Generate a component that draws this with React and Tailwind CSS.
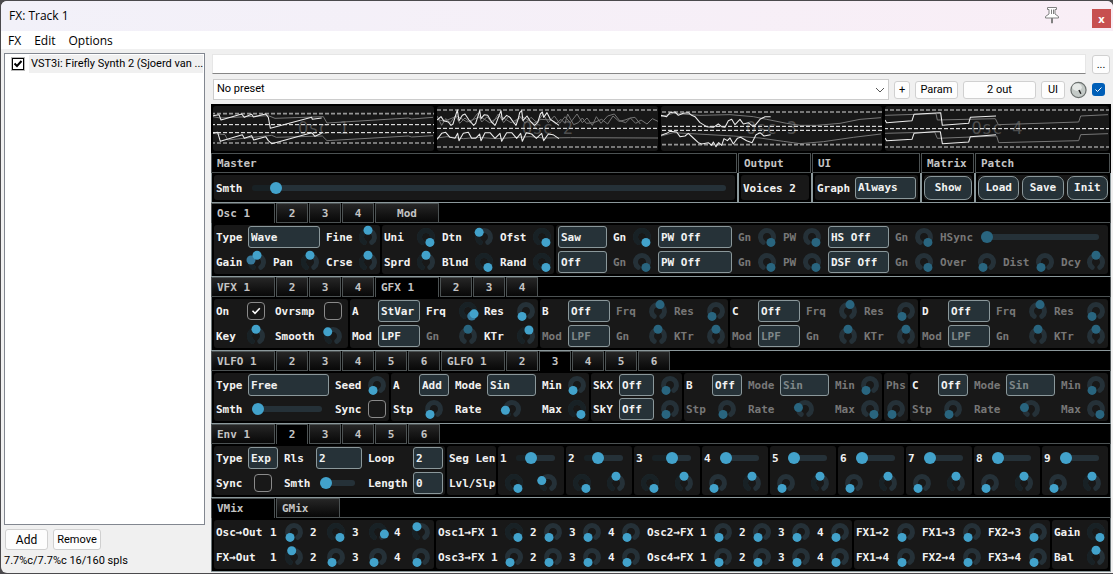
import { useId } from "react";

const RANGE = 144;

function polar(r, deg) {
  const a = (deg * Math.PI) / 180;
  return [10 + r * Math.sin(a), 10 - r * Math.cos(a)];
}

function arc(from, to) {
  const [x1, y1] = polar(6.5, from);
  const [x2, y2] = polar(6.5, to);
  return `M${x1} ${y1}A6.5 6.5 0 ${to - from > 180 ? 1 : 0} 1 ${x2} ${y2}`;
}

function Knob({ id, name, v = 0, mod, dim }) {
  const angle = -RANGE + 2 * RANGE * v;
  const [tx, ty] = polar(6.7, angle);
  const ghost = mod === undefined ? null : polar(6.3, -RANGE + 2 * RANGE * mod);
  return (
    <span className="grid h-5 w-5 justify-self-center">
      <input
        id={id}
        aria-label={name}
        type="range"
        min="0"
        max="1"
        step="0.01"
        defaultValue={v}
        disabled={dim}
        className="col-start-1 row-start-1 m-0 h-5 w-5 opacity-0"
      />
      <svg viewBox="0 0 20 20" className="pointer-events-none col-start-1 row-start-1 h-5 w-5 overflow-visible" fill="none">
        <path d={arc(-RANGE, RANGE)} stroke="#253138" strokeWidth="5" strokeLinecap="round" />
        {!dim && v > 0 && <path d={arc(-RANGE, angle)} stroke="#182125" strokeWidth="5" strokeLinecap="round" />}
        {ghost && <circle cx={ghost[0]} cy={ghost[1]} r="4.5" fill="#37799b" />}
        <circle cx={tx} cy={ty} r="4.5" fill={dim ? "#29657f" : "#42a2cb"} />
      </svg>
    </span>
  );
}

function Slider({ id, name, v = 0, dim }) {
  const fill = dim ? "#253138" : "#182125";
  return (
    <input
      id={id}
      aria-label={name}
      type="range"
      min="0"
      max="1"
      step="0.001"
      defaultValue={v}
      disabled={dim}
      style={{ backgroundImage: `linear-gradient(to right, ${fill} ${v * 100}%, #253138 ${v * 100}%)` }}
      className={
        "mr-[7px] ml-1 h-[6px] appearance-none rounded-full [&::-webkit-slider-thumb]:h-3 [&::-webkit-slider-thumb]:w-3 [&::-webkit-slider-thumb]:appearance-none [&::-webkit-slider-thumb]:rounded-full " +
        (dim ? "[&::-webkit-slider-thumb]:bg-[#29657f]" : "[&::-webkit-slider-thumb]:bg-[#42a2cb]")
      }
    />
  );
}

function Combo({ id, name, v, dim }) {
  return (
    <select
      id={id}
      aria-label={name}
      disabled={dim}
      className={
        "h-[22px] appearance-none rounded-[3px] border border-[#8b989b] bg-[#263238] pl-[2px] leading-none opacity-100 " +
        (dim ? "text-[#7f8789]" : "text-[#f2f2f2]")
      }
    >
      <option>{v}</option>
    </select>
  );
}

function Check({ id, name, v }) {
  return (
    <span className="grid h-[18px] w-[18px] justify-self-center">
      <input
        id={id}
        aria-label={name}
        type="checkbox"
        defaultChecked={v}
        className="peer col-start-1 row-start-1 m-0 h-[18px] w-[18px] appearance-none rounded-[4px] border border-[#8a8a8a]"
      />
      <svg
        viewBox="0 0 18 18"
        className="pointer-events-none invisible col-start-1 row-start-1 peer-checked:visible"
        fill="none"
        stroke="#ffffff"
        strokeWidth="1.6"
      >
        <path d="M5.5 8.8L8 11.3L12.8 6.3" />
      </svg>
    </span>
  );
}

function Lab({ htmlFor, dim, children }) {
  const Tag = htmlFor ? "label" : "span";
  return (
    <Tag htmlFor={htmlFor} className={"pt-[2px] " + (dim ? "text-[#777777]" : "text-[#f2f2f2]")}>
      {children}
    </Tag>
  );
}

const KINDS = { knob: Knob, slider: Slider, combo: Combo, check: Check };

function P({ l, k = "knob", dim, ...rest }) {
  const id = useId();
  const Control = KINDS[k];
  return (
    <>
      <Lab htmlFor={id} dim={dim}>{l}</Lab>
      <Control id={id} dim={dim} {...rest} />
    </>
  );
}

function Row({ cols, children }) {
  return <div className={"grid min-w-0 items-center gap-x-[6px] px-[2px] whitespace-nowrap [&>*]:min-w-0 " + cols}>{children}</div>;
}

function Panel({ children }) {
  return <div className="grid min-w-0 auto-rows-[24px] grid-cols-1 content-between rounded-[3px] bg-[#181818]">{children}</div>;
}

function Tab({ children, active, wide, center }) {
  return (
    <button
      type="button"
      className={
        "h-5 border-x border-t border-[#4c5253] pt-px text-[#c4c4c4] " +
        (wide ? "w-16 " : "w-8 ") +
        (wide && !center ? "pl-[5px] text-left " : "text-center ") +
        (active ? "bg-black" : "border-b bg-linear-to-b from-[#262626] to-[#080808]")
      }
    >
      {children}
    </button>
  );
}

function Section({ name, tabs, cols, height = "h-[49px]", children }) {
  return (
    <section aria-label={name} className="border-b border-[#8b989b]">
      <div className="flex h-5 gap-px border-r border-[#4c5253] bg-black">
        {tabs}
        <span className="-ml-px flex-1 border-b border-[#4c5253]" />
      </div>
      <div className="border-x border-[#6c7678] px-[2px] py-[2px]">
        <div className={"grid gap-x-[2px] " + height + " " + cols}>{children}</div>
      </div>
    </section>
  );
}

const dashes = "12 6";

function Scope({ label, view, outer, inner, bright, faint }) {
  return (
    <div className="grid min-w-0 place-items-center rounded-[3px] bg-[#181818]">
      <span className="col-start-1 row-start-1 text-[17px] leading-none font-normal text-[#4e4e4e]">{label}</span>
      <svg viewBox={view} preserveAspectRatio="none" className="col-start-1 row-start-1 h-[45px] w-full" fill="none">
        {faint.map((p) => (
          <polyline key={p} points={p} stroke="#767676" strokeWidth="3" strokeLinejoin="round" />
        ))}
        {outer.map((y) => (
          <path key={y} d={`M0 ${y}H1200`} stroke="#969696" strokeWidth="5" strokeDasharray={dashes} />
        ))}
        {inner.map((y) => (
          <path key={y} d={`M0 ${y}H1200`} stroke="#ffffff" strokeWidth="3" strokeDasharray={dashes} />
        ))}
        {bright.map((p) => (
          <polyline key={p} points={p} stroke="#ececec" strokeWidth="3.2" strokeLinejoin="round" />
        ))}
      </svg>
    </div>
  );
}

const scopes = [
  {
    label: "Osc 1",
    view: "24 18 663 135",
    outer: [41, 129],
    inner: [74, 98],
    bright: [
      "24,47 42,44 48,60 110,42 118,52 140,43 145,51 182,42 190,52 196,85 320,52 322,58 350,54",
      "24,99 38,97 46,124 112,104 118,115 140,107 146,120 182,110 190,122 200,131 320,98 330,109 350,100",
    ],
    faint: [
      "24,50 45,54 190,47 210,55 355,50 366,69 610,54 620,57 684,52",
      "24,100 60,104 68,120 200,106 214,112 352,108 366,122 610,108 620,111 684,107",
    ],
  },
  {
    label: "Osc 2",
    view: "0 0 663 135",
    outer: [12, 123],
    inner: [67],
    bright: [
      "0,42 12,32 20,44 34,48 42,58 48,54 61,12 66,44 76,28 84,24 96,42 110,58 116,52 128,14 132,38 142,26 152,28 164,48 174,58 178,50 192,14 196,42 209,28 219,34 229,48 237,58 244,38 248,20 254,14 258,44 270,30 280,46 292,58 302,50 310,24 316,18 320,34 330,20 340,40 352,48 366,58",
      "0,100 14,82 26,79 39,94 54,97 62,82 66,104 79,82 94,79 104,97 116,97 128,84 132,104 144,80 159,80 174,97 189,82 194,106 209,80 224,80 239,97 251,82 256,106 268,80 284,84 298,97 314,82 320,104 334,84 348,86 366,98",
    ],
    faint: [
      "0,30 14,58 26,38 40,50 56,28 68,52 84,36 100,50 122,22 134,48 150,32 166,52 184,24 200,50 216,30 232,54 248,30 264,52 282,34 300,50 318,24 334,50 352,30 368,52 384,32 400,50 420,24 436,50 450,36 466,58 478,32 492,52 512,30 532,24 548,44 566,50 580,36 596,52 612,42 630,54 646,38 663,46",
      "0,40 22,46 60,30 90,48 130,32 158,50 190,30 222,50 256,32 290,52 312,40 344,42 356,54 372,40 384,52 392,24 410,56 424,50 436,36 448,52 470,50 494,40 512,54 528,30 546,46 564,42 580,36 594,34 610,54",
      "0,96 30,92 80,98 120,94 180,98 240,94 280,92 320,96 400,95 663,96",
    ],
  },
  {
    label: "Osc 3",
    view: "483 18 663 135",
    outer: [36, 134],
    inner: [79, 91],
    bright: [
      "483,46 500,50 510,38 525,36 535,46 550,40 565,38 575,46 585,50 600,68 620,80 640,82 655,72 665,80 675,82 685,62 695,58 705,74 720,58 730,72 745,68 755,76 765,76 780,58 795,50 812,50",
      "483,106 500,100 510,94 530,96 540,110 555,108 565,100 580,114 595,128 605,132 625,128 635,136 640,126 648,140 656,128 665,136 672,116 682,122 690,114 700,132 712,115 722,112 740,122 756,128 768,104 780,98 792,108 812,104",
    ],
    faint: [
      "483,50 520,40 600,46 690,44 760,50 800,58 860,70 900,76 950,76 1020,70 1080,58 1143,53",
      "483,108 520,98 700,108 780,114 850,124 900,131 970,125 1060,112 1143,102",
    ],
  },
  {
    label: "Osc 4",
    view: "255 18 672 135",
    outer: [30, 141],
    inner: [86],
    bright: [
      "255,60 260,68 336,62 342,43 422,38 427,76 506,70 511,52 588,48",
      "255,114 260,122 336,118 342,100 403,95 421,95 427,131 506,126 511,110 588,104",
    ],
    faint: [
      "255,46 408,41 412,60 586,56 595,74 836,66 842,48 924,44",
      "255,100 404,96 412,115 590,108 596,128 836,122 842,104 924,101",
    ],
  },
];

function Head({ title, children }) {
  return (
    <section aria-label={title} className="min-w-0 border-b border-[#8b989b]">
      <h2 className="mr-px h-5 border border-[#4c5253] pt-px pl-[5px] leading-[18px] text-[#c4c4c4]">{title}</h2>
      <div className="border-x border-[#8b989b] p-[2px]">
        <div className="grid h-[25px] rounded-[3px] bg-[#181818]">{children}</div>
      </div>
    </section>
  );
}

function Push({ children }) {
  return (
    <button type="button" className="h-6 rounded-[7px] border border-[#8b989b] bg-[#263238] pt-px text-[#f2f2f2]">
      {children}
    </button>
  );
}

function Numbers({ values, names }) {
  return values.map((v, i) => <P key={i} l={String(i + 1)} v={v} name={names + " " + (i + 1)} />);
}

const FILTER = "grid-cols-[20fr_42fr_26fr_20fr_26fr_20fr]";
const LFO = "grid-cols-[20fr_30fr_26fr_49fr_19fr_20fr]";
const OUTS = "grid-cols-[48fr_8fr_20fr_10fr_20fr_10fr_20fr_10fr_22fr]";
const SENDS = "grid-cols-[47fr_7fr_20fr_7fr_20fr_7fr_20fr_7fr_20fr_47fr_7fr_20fr_7fr_20fr_7fr_20fr_7fr_20fr]";
const THREE = "grid-cols-[34fr_20fr_34fr_20fr_34fr_20fr]";

const segments = [
  [0.35, 1, 0.26],
  [0.31, 1, 0.5],
  [0.5, 1, 0.5],
  [0, 0, 0.5],
  [0, 0, 0.5],
  [0, 0, 0.5],
  [0, 0, 0.5],
  [0, 0, 0.5],
  [0, 0, 0.5],
];

function Synth() {
  return (
    <div className="bg-black pt-[2px] font-['DejaVu_Sans_Mono','Liberation_Mono',monospace] text-[11px] leading-4 font-bold">
      <div className="grid grid-cols-[221fr_221fr_221fr_224fr] gap-x-[3px] px-[2px] pb-[2px]">
        {scopes.map((s) => (
          <Scope key={s.label} {...s} />
        ))}
      </div>

      <div className="grid grid-cols-[527fr_74fr_109fr_54fr_136fr]">
        <Head title="Master">
          <Row cols="grid-cols-[26fr_485fr]"><P l="Smth" k="slider" v={0.038} /></Row>
        </Head>
        <Head title="Output">
          <Row cols="grid-cols-1"><Lab>Voices 2</Lab></Row>
        </Head>
        <Head title="UI">
          <Row cols="grid-cols-[32fr_61fr]"><P l="Graph" k="combo" v="Always" /></Row>
        </Head>
        <Head title="Matrix">
          <div className="grid items-center"><Push>Show</Push></div>
        </Head>
        <Head title="Patch">
          <div className="grid grid-cols-3 items-center gap-x-[3px]">
            <Push>Load</Push>
            <Push>Save</Push>
            <Push>Init</Push>
          </div>
        </Head>
      </div>

      <Section
        name="Oscillators"
        cols="grid-cols-[166fr_172fr_552fr]"
        tabs={<><Tab wide active>Osc 1</Tab><Tab>2</Tab><Tab>3</Tab><Tab>4</Tab><Tab wide center>Mod</Tab></>}
      >
        <Panel>
          <Row cols="grid-cols-[26fr_72fr_26fr_20fr]">
            <P l="Type" k="combo" v="Wave" /><P l="Fine" v={0.5} />
          </Row>
          <Row cols="grid-cols-[25fr_20fr_21fr_20fr_26fr_20fr]">
            <P l="Gain" v={0.5} mod={0.25} /><P l="Pan" v={0.5} /><P l="Crse" v={0.5} />
          </Row>
        </Panel>
        <Panel>
          <Row cols="grid-cols-[26fr_20fr_26fr_20fr_26fr_20fr]">
            <P l="Uni" v={1} /><P l="Dtn" v={0.34} /><P l="Ofst" v={1} />
          </Row>
          <Row cols="grid-cols-[26fr_20fr_26fr_20fr_26fr_20fr]">
            <P l="Sprd" v={0.5} /><P l="Blnd" v={1} /><P l="Rand" v={1} />
          </Row>
        </Panel>
        <Panel>
          <Row cols="grid-cols-[49fr_13fr_20fr_74fr_13fr_20fr_13fr_20fr_61fr_13fr_20fr_31fr_129fr]">
            <Combo v="Saw" name="Wave 1" /><P l="Gn" v={1} />
            <Combo v="PW Off" name="Pulse 1" /><P l="Gn" v={1} dim /><P l="PW" v={1} dim />
            <Combo v="HS Off" name="Hard sync" /><P l="Gn" v={1} dim /><P l="HSync" k="slider" dim />
          </Row>
          <Row cols="grid-cols-[49fr_13fr_20fr_74fr_13fr_20fr_13fr_20fr_61fr_13fr_20fr_31fr_20fr_26fr_20fr_19fr_20fr]">
            <Combo v="Off" name="Wave 2" /><P l="Gn" v={1} dim />
            <Combo v="PW Off" name="Pulse 2" /><P l="Gn" v={1} dim /><P l="PW" v={1} dim />
            <Combo v="DSF Off" name="DSF" /><P l="Gn" v={1} dim /><P l="Over" dim /><P l="Dist" dim /><P l="Dcy" v={0.5} dim />
          </Row>
        </Panel>
      </Section>

      <Section
        name="Effects"
        cols="grid-cols-[134fr_188fr_188fr_188fr_188fr]"
        tabs={
          <>
            <Tab wide>VFX 1</Tab><Tab>2</Tab><Tab>3</Tab><Tab>4</Tab>
            <Tab wide active>GFX 1</Tab><Tab>2</Tab><Tab>3</Tab><Tab>4</Tab>
          </>
        }
      >
        <Panel>
          <Row cols="grid-cols-[21fr_26fr_39fr_26fr]">
            <P l="On" k="check" v={true} /><P l="Ovrsmp" k="check" v={false} />
          </Row>
          <Row cols="grid-cols-[21fr_26fr_39fr_26fr]">
            <P l="Key" v={0.5} /><P l="Smooth" v={0.32} />
          </Row>
        </Panel>
        <Panel>
          <Row cols={FILTER}>
            <P l="A" k="combo" v="StVar" /><P l="Frq" v={0.9} mod={1} /><P l="Res" />
          </Row>
          <Row cols={FILTER}>
            <P l="Mod" k="combo" v="LPF" /><P l="Gn" v={0.5} dim /><P l="KTr" v={0.59} />
          </Row>
        </Panel>
        {["B", "C", "D"].map((n) => (
          <Panel key={n}>
            <Row cols={FILTER}>
              <P l={n} k="combo" v="Off" /><P l="Frq" v={0.56} dim /><P l="Res" dim />
            </Row>
            <Row cols={FILTER}>
              <P l="Mod" k="combo" v="LPF" dim /><P l="Gn" v={0.5} dim /><P l="KTr" v={0.5} dim />
            </Row>
          </Panel>
        ))}
      </Section>

      <Section
        name="LFO"
        height="h-12"
        cols="grid-cols-[175fr_198fr_91fr_198fr_24fr_198fr]"
        tabs={
          <>
            <Tab wide>VLFO 1</Tab><Tab>2</Tab><Tab>3</Tab><Tab>4</Tab><Tab>5</Tab><Tab>6</Tab>
            <Tab wide>GLFO 1</Tab><Tab>2</Tab><Tab active>3</Tab><Tab>4</Tab><Tab>5</Tab><Tab>6</Tab>
          </>
        }
      >
        <Panel>
          <Row cols="grid-cols-[26fr_81fr_26fr_20fr]">
            <P l="Type" k="combo" v="Free" /><P l="Seed" />
          </Row>
          <Row cols="grid-cols-[26fr_81fr_26fr_20fr]">
            <P l="Smth" k="slider" /><P l="Sync" k="check" v={false} />
          </Row>
        </Panel>
        <Panel>
          <Row cols={LFO}><P l="A" k="combo" v="Add" /><P l="Mode" k="combo" v="Sin" /><P l="Min" /></Row>
          <Row cols={LFO}><P l="Stp" /><P l="Rate" v={0.15} /><P l="Max" v={1} /></Row>
        </Panel>
        <Panel>
          <Row cols="grid-cols-[20fr_35fr_20fr]"><P l="SkX" k="combo" v="Off" /><Knob name="Skew X" dim /></Row>
          <Row cols="grid-cols-[20fr_35fr_20fr]"><P l="SkY" k="combo" v="Off" /><Knob name="Skew Y" dim /></Row>
        </Panel>
        <Panel>
          <Row cols={LFO}><P l="B" k="combo" v="Off" /><P l="Mode" k="combo" v="Sin" dim /><P l="Min" dim /></Row>
          <Row cols={LFO}><P l="Stp" dim /><P l="Rate" v={0.23} dim /><P l="Max" v={1} dim /></Row>
        </Panel>
        <div className="grid min-w-0 auto-rows-[24px] grid-cols-1 items-center rounded-[3px] bg-[#181818] px-[2px] whitespace-nowrap">
          <P l="Phs" dim />
        </div>
        <Panel>
          <Row cols={LFO}><P l="C" k="combo" v="Off" /><P l="Mode" k="combo" v="Sin" dim /><P l="Min" dim /></Row>
          <Row cols={LFO}><P l="Stp" dim /><P l="Rate" v={0.23} dim /><P l="Max" v={1} dim /></Row>
        </Panel>
      </Section>

      <Section
        name="Envelopes"
        cols="grid-cols-[231fr_49fr_66fr_66fr_66fr_66fr_66fr_66fr_66fr_66fr_66fr]"
        tabs={<><Tab wide>Env 1</Tab><Tab active>2</Tab><Tab>3</Tab><Tab>4</Tab><Tab>5</Tab><Tab>6</Tab></>}
      >
        <Panel>
          <Row cols="grid-cols-[26fr_30fr_26fr_46fr_39fr_30fr]">
            <P l="Type" k="combo" v="Exp" /><P l="Rls" k="combo" v="2" /><P l="Loop" k="combo" v="2" />
          </Row>
          <Row cols="grid-cols-[26fr_30fr_26fr_46fr_39fr_30fr]">
            <P l="Sync" k="check" v={false} /><P l="Smth" k="slider" /><P l="Length" k="combo" v="0" />
          </Row>
        </Panel>
        <Panel>
          <Row cols="grid-cols-1"><Lab>Seg Len</Lab></Row>
          <Row cols="grid-cols-1"><Lab>Lvl/Slp</Lab></Row>
        </Panel>
        {segments.map(([len, level, slope], i) => (
          <Panel key={i}>
            <Row cols="grid-cols-[6fr_50fr]"><P l={String(i + 1)} k="slider" v={len} /></Row>
            <Row cols="grid-cols-2">
              <Knob v={level} name={"Level " + (i + 1)} />
              <Knob v={slope} name={"Slope " + (i + 1)} />
            </Row>
          </Panel>
        ))}
      </Section>

      <Section
        name="Mixer"
        cols="grid-cols-[220fr_416fr_196fr_56fr]"
        tabs={<><Tab wide active>VMix</Tab><Tab wide>GMix</Tab></>}
      >
        <Panel>
          <Row cols={OUTS}><Lab>Osc→Out</Lab><Numbers values={[0, 1, 0.875, 0.37]} names="Osc to out" /></Row>
          <Row cols={OUTS}><Lab>FX→Out</Lab><Numbers values={[0.43, 0, 0, 0]} names="FX to out" /></Row>
        </Panel>
        <Panel>
          <Row cols={SENDS}>
            <Lab>Osc1→FX</Lab><Numbers values={[1, 0, 0, 0]} names="Osc 1 to FX" />
            <Lab>Osc2→FX</Lab><Numbers values={[0, 0, 0, 0]} names="Osc 2 to FX" />
          </Row>
          <Row cols={SENDS}>
            <Lab>Osc3→FX</Lab><Numbers values={[0, 0, 0, 0]} names="Osc 3 to FX" />
            <Lab>Osc4→FX</Lab><Numbers values={[0, 0, 0, 0]} names="Osc 4 to FX" />
          </Row>
        </Panel>
        <Panel>
          <Row cols={THREE}><P l="FX1→2" /><P l="FX1→3" /><P l="FX2→3" /></Row>
          <Row cols={THREE}><P l="FX1→4" /><P l="FX2→4" /><P l="FX3→4" /></Row>
        </Panel>
        <Panel>
          <Row cols="grid-cols-[26fr_20fr]"><P l="Gain" v={1} /></Row>
          <Row cols="grid-cols-[26fr_20fr]"><P l="Bal" v={0.5} /></Row>
        </Panel>
      </Section>
    </div>
  );
}

function HostButton({ className, children }) {
  return (
    <button type="button" className={"rounded-[3px] border border-[#d0d0d0] bg-[#fdfdfd] text-center leading-none " + className}>
      {children}
    </button>
  );
}

export default function App() {
  return (
    <div className="min-h-screen bg-[#4b4a4d] py-px pl-px font-[Roboto,'Liberation_Sans',sans-serif] text-[11px] text-black">
      <div className="rounded-t-[6px] rounded-bl-[6px] bg-[#f0f0f0] pb-px">
        <header className="flex h-[30px] items-center rounded-t-[6px] bg-linear-to-r from-[#f2f1f9] to-[#f9eef6] pl-2">
          <h1 className="flex-1 font-['Open_Sans','Noto_Sans',sans-serif] text-[12px]">FX: Track 1</h1>
          <button type="button" aria-label="Pin" className="mr-8 pb-[2px]">
            <svg viewBox="0 0 16 18" className="h-[18px] w-4" fill="#ffffff" stroke="#808080" strokeWidth="1">
              <path d="M3.5 1.5h9v2h-1.500v4.500l3.500 2.500v1.500H1.500v-1.500L5 8V3.500h-1.500z" />
              <path d="M7.500 12v5h1v-5M7.500 3.500v4.500M9.500 3.500v4.500" />
            </svg>
          </button>
          <button
            type="button"
            aria-label="Close"
            className="mt-1 mr-[2px] h-[19px] w-[19px] self-center bg-[#c75050] font-['Open_Sans','Noto_Sans',sans-serif] text-[11px] leading-none font-bold text-white"
          >
            x
          </button>
        </header>
        <nav className="flex h-[18px] items-center gap-[13px] bg-white pt-[2px] pl-[7px] font-['Open_Sans','Noto_Sans',sans-serif] text-[12px] leading-4">
          <button type="button">FX</button>
          <button type="button">Edit</button>
          <button type="button">Options</button>
        </nav>

        <div className="flex">
          <aside className="flex w-[204px] shrink-0 flex-col pt-1 pl-[3px]">
            <div className="h-[472px] border border-[#828790] bg-white p-px">
              <label className="flex h-[18px] items-center">
                <span className="ml-[5px] grid h-[14px] w-[14px]">
                  <input
                    type="checkbox"
                    defaultChecked
                    className="col-start-1 row-start-1 h-[14px] w-[14px] appearance-none border-2 border-black bg-white outline outline-[#b8b8b8] -outline-offset-1"
                  />
                  <svg viewBox="0 0 14 14" className="pointer-events-none col-start-1 row-start-1" fill="none" stroke="#000000" strokeWidth="2">
                    <path d="M3.500 6.500L6 9L10.500 4" />
                  </svg>
                </span>
                <span className="ml-1 min-w-0 flex-1 bg-[#f0f0f0] pl-[2px] leading-[18px] whitespace-nowrap">VST3i: Firefly Synth 2 (Sjoerd van ...</span>
              </label>
            </div>
            <div className="mt-1 ml-px flex gap-[5px]">
              <HostButton className="h-[21px] w-[43px] text-[12px]">Add</HostButton>
              <HostButton className="h-[21px] w-12">Remove</HostButton>
            </div>
            <p className="mt-[3px] leading-4">7.7%c/7.7%c 16/160 spls</p>
          </aside>

          <main className="ml-[6px] min-w-0 flex-1 pt-[5px]">
            <div className="mr-[3px] ml-px flex items-center gap-[6px]">
              <input aria-label="Comment" className="h-5 min-w-0 flex-1 border border-[#e6e6e6] border-b-[#868686] bg-white px-1" />
              <HostButton className="h-[19px] w-[18px]">...</HostButton>
            </div>
            <div className="mt-[5px] mr-2 ml-[2px] flex h-[21px] items-center gap-[5px]">
              <span className="grid min-w-0 flex-1 items-center">
                <select aria-label="Preset" className="col-start-1 row-start-1 h-[21px] w-full appearance-none border border-[#cccccc] bg-white pl-[3px]">
                  <option>No preset</option>
                </select>
                <svg viewBox="0 0 10 6" className="pointer-events-none col-start-1 row-start-1 mr-1 h-[6px] w-[10px] justify-self-end" fill="none" stroke="#555555">
                  <path d="M1 1l4 4l4-4" />
                </svg>
              </span>
              <HostButton className="h-[18px] w-4">+</HostButton>
              <HostButton className="h-[18px] w-[43px]">Param</HostButton>
              <HostButton className="h-[18px] w-[73px]">2 out</HostButton>
              <HostButton className="h-[18px] w-6">UI</HostButton>
              <span className="grid h-[18px] w-[17px]">
                <input aria-label="Wet" type="range" className="col-start-1 row-start-1 w-[17px] opacity-0" />
                <svg viewBox="0 0 18 18" className="pointer-events-none col-start-1 row-start-1 h-[18px] w-[17px]">
                  <circle cx="9" cy="9" r="8" fill="#c3c9c6" stroke="#6b706e" strokeWidth="1.300" />
                  <ellipse cx="7.500" cy="6" rx="5" ry="4" fill="#e6e9e7" />
                  <path d="M9.500 9L11.500 13" stroke="#222222" strokeWidth="1.500" />
                </svg>
              </span>
              <span className="grid h-[14px] w-[13px]">
                <input
                  aria-label="Enabled"
                  type="checkbox"
                  defaultChecked
                  className="col-start-1 row-start-1 h-[13px] w-[13px] appearance-none rounded-[3px] bg-[#005fb8]"
                />
                <svg viewBox="0 0 13 13" className="pointer-events-none col-start-1 row-start-1 h-[13px] w-[13px]" fill="none" stroke="#ffffff">
                  <path d="M3.500 6.500L5.500 8.500L9.500 4.500" />
                </svg>
              </span>
            </div>
            <div className="mt-1 mr-[2px]">
              <Synth />
            </div>
          </main>
        </div>
      </div>
    </div>
  );
}
